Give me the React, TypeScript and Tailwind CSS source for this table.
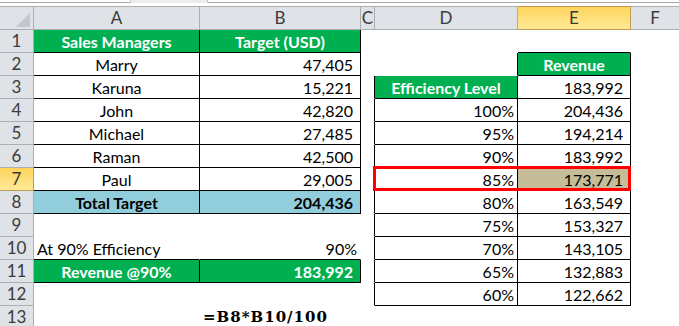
import React from "react";

type Cell = {
  t?: string;
  al?: "l" | "c" | "r";
  b?: boolean;
  fill?: "g" | "blue" | "tan";
  br?: boolean;
  bb?: boolean;
  pct?: boolean;
  formula?: boolean;
};

const E: Cell = {};

function num(t: string, extra: Partial<Cell> = {}): Cell {
  return { t, al: "r", br: true, bb: true, ...extra };
}
function pct(t: string): Cell {
  return { t, al: "r", br: true, bb: true, pct: true };
}
function name(t: string): Cell {
  return { t, al: "c", br: true, bb: true };
}

// columns: A, B, C, D, E, F
const rows: Cell[][] = [
  [
    { t: "Sales Managers", al: "c", b: true, fill: "g", br: true, bb: true },
    { t: "Target (USD)", al: "c", b: true, fill: "g", br: true, bb: true },
    E,
    E,
    { bb: true },
    E,
  ],
  [name("Marry"), num("47,405"), E, { br: true }, { t: "Revenue", al: "c", b: true, fill: "g", br: true, bb: true }, E],
  [name("Karuna"), num("15,221"), { br: true }, { t: "Efficiency Level", al: "c", b: true, fill: "g", br: true, bb: true }, num("183,992"), E],
  [name("John"), num("42,820"), { br: true }, pct("100%"), num("204,436"), E],
  [name("Michael"), num("27,485"), { br: true }, pct("95%"), num("194,214"), E],
  [name("Raman"), num("42,500"), { br: true }, pct("90%"), num("183,992"), E],
  [name("Paul"), num("29,005"), { br: true }, pct("85%"), num("173,771", { fill: "tan" }), E],
  [
    { t: "Total Target", al: "c", b: true, fill: "blue", br: true, bb: true },
    { t: "204,436", al: "r", b: true, fill: "blue", br: true, bb: true },
    { br: true },
    pct("80%"),
    num("163,549"),
    E,
  ],
  [E, E, { br: true }, pct("75%"), num("153,327"), E],
  [
    { t: "At 90% Efficiency", al: "l", bb: true },
    { t: "90%", al: "r", bb: true, pct: true },
    { br: true },
    pct("70%"),
    num("143,105"),
    E,
  ],
  [
    { t: "Revenue @90%", al: "c", b: true, fill: "g", br: true, bb: true },
    { t: "183,992", al: "r", b: true, fill: "g", br: true, bb: true },
    { br: true },
    pct("65%"),
    num("132,883"),
    E,
  ],
  [E, E, { br: true }, pct("60%"), num("122,662"), E],
  [E, { t: "=B8*B10/100", al: "l", formula: true }, E, E, E, E],
];

function DataCell({ c }: { c: Cell }) {
  const fill =
    c.fill === "g"
      ? "bg-[#00b050] text-white"
      : c.fill === "blue"
      ? "bg-[#92cddc] text-black"
      : c.fill === "tan"
      ? "bg-[#c4bd97] text-black"
      : "bg-white text-black";
  const align =
    c.al === "c"
      ? "justify-center"
      : c.al === "r"
      ? c.pct
        ? "justify-end pr-[3px]"
        : "justify-end pr-[7px]"
      : c.formula
      ? "justify-start pl-[3px]"
      : "justify-start pl-[3px]";
  const br = c.br ? "border-r-black" : "border-r-transparent";
  const bb = c.bb ? "border-b-black" : "border-b-transparent";
  const font = c.formula
    ? "font-['DejaVu_Serif',serif] font-bold text-[15px] tracking-[1px]"
    : c.b
    ? "font-bold"
    : "font-normal";
  return (
    <div
      className={`flex items-center whitespace-nowrap border-r border-b ${br} ${bb} ${fill} ${align} ${font}`}
    >
      <span className="leading-[19px]">{c.t ?? ""}</span>
    </div>
  );
}

const cols = ["A", "B", "C", "D", "E", "F"];

export default function App() {
  return (
    <div className="relative h-[326px] w-[679px] overflow-hidden bg-white font-['Lato',sans-serif] text-[16px]">
      {/* top chrome strip */}
      <div className="h-[6px] bg-white">
        <div className="flex h-[3px] border-b border-[#a6a6a6]">
          <div className="ml-[130px] h-[3px] w-[78px] border-x border-[#c8c8c8] bg-[#ececec]" />
        </div>
      </div>
      <div className="grid grid-cols-[34px_166px_161px_14px_143px_113px_49px] grid-rows-[24px_repeat(13,23px)]">
        {/* corner */}
        <div className="flex items-end justify-end border-y border-r border-[#abafb4] bg-[#dfe2e7] pb-[2px] pr-[3px]">
          <svg width="14" height="14" viewBox="0 0 14 14">
            <polygon points="14,0 14,14 0,14" fill="#c3c7cc" />
          </svg>
        </div>
        {cols.map((c) =>
          c === "E" ? (
            <div
              key={c}
              className="flex items-center justify-center border-y border-r border-[#c29a55] bg-gradient-to-b from-[#ffd45a] to-[#ffea96] text-[17px] text-[#3b3b3b]"
            >
              {c}
            </div>
          ) : (
            <div
              key={c}
              className="flex items-center justify-center border-y border-r border-[#abafb4] bg-[#dfe2e7] text-[17px] text-[#3b3b3b]"
            >
              {c}
            </div>
          )
        )}
        {rows.map((r, i) => (
          <React.Fragment key={i}>
            {i === 6 ? (
              <div className="flex items-center justify-center border-r border-b border-[#c29a55] bg-gradient-to-b from-[#ffd45a] to-[#ffea96] text-[17px] text-[#3b3b3b]">
                {i + 1}
              </div>
            ) : (
              <div className="flex items-center justify-center border-r border-b border-[#abafb4] bg-[#dfe2e7] text-[17px] text-[#3b3b3b]">
                {i + 1}
              </div>
            )}
            {r.map((c, j) => (
              <DataCell key={j} c={c} />
            ))}
          </React.Fragment>
        ))}
      </div>
      {/* highlight rectangle around D7:E7 */}
      <div className="pointer-events-none absolute left-[373px] top-[166px] h-[25px] w-[258px] border-[3px] border-[#ff0000]" />
    </div>
  );
}
